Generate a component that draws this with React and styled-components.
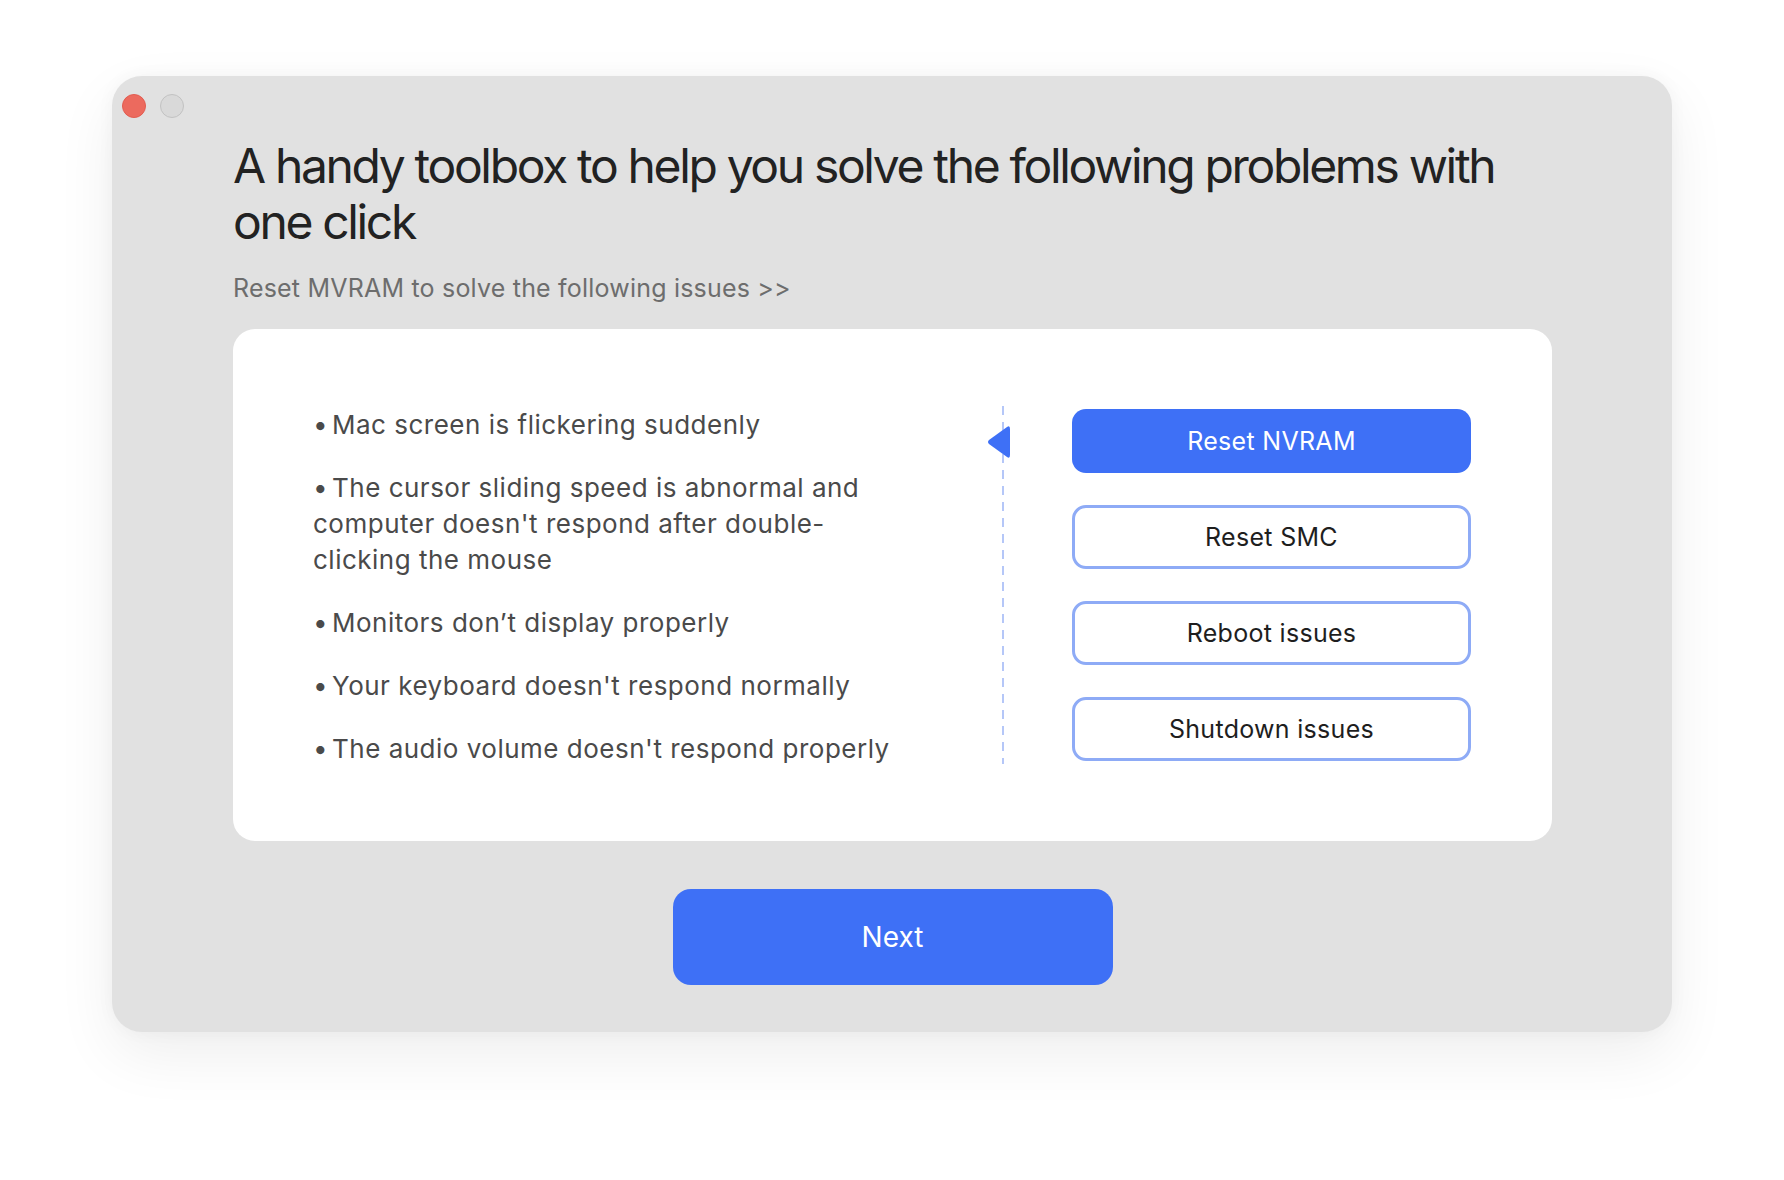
import React, { useState } from 'react';
import styled, { createGlobalStyle } from 'styled-components';

const GlobalStyle = createGlobalStyle`
    html, body {
        margin: 0;
        padding: 0;
        background: #fff;
    }
    body {
        font-family: Inter, "Noto Sans", "Liberation Sans", sans-serif;
        -webkit-font-smoothing: antialiased;
    }
`

const Page = styled.div`
    display: flex;
    justify-content: center;
    padding-top: 76px;
    min-height: 1180px;
    box-sizing: border-box;
`

const Window = styled.div`
    width: 1560px;
    height: 956px;
    box-sizing: border-box;
    background: #e1e1e1;
    border-radius: 30px;
    box-shadow: 0 22px 60px rgba(0, 0, 0, 0.07), 0 0 18px rgba(0, 0, 0, 0.04);
    display: flex;
    flex-direction: column;
`

const TitleBar = styled.div`
    display: flex;
    gap: 14px;
    padding: 18px 0 0 10px;
`

const Light = styled.span`
    width: 24px;
    height: 24px;
    border-radius: 50%;
    box-sizing: border-box;
    background: ${p => p.$close ? '#ec6a5e' : '#d9d9d9'};
    border: 1px solid ${p => p.$close ? '#e25c50' : '#c2c2c2'};
`

const Content = styled.div`
    display: flex;
    flex-direction: column;
    padding: 0 120px 0 121px;
`

const Title = styled.h1`
    margin: 20px 0 0;
    font-size: 48px;
    line-height: 56px;
    font-weight: 400;
    color: #222;
    letter-spacing: -2.35px;
`

const Subtitle = styled.div`
    margin-top: 23px;
    font-size: 25px;
    line-height: 30px;
    color: #6d6d6d;
    letter-spacing: 0.2px;
`

const Card = styled.div`
    margin-top: 26px;
    height: 512px;
    box-sizing: border-box;
    background: #fff;
    border-radius: 22px;
    display: flex;
    align-items: center;
    padding: 0 81px 0 80px;
`

const IssueList = styled.ul`
    list-style: none;
    margin: 4px 0 0;
    padding: 0;
    width: 600px;
    display: flex;
    flex-direction: column;
    gap: 27px;
`

const Issue = styled.li`
    font-size: 26px;
    line-height: 36px;
    color: #4a4a4a;
    letter-spacing: 0.5px;

    &::before {
        content: '\\2022';
        display: inline-block;
        width: 19px;
        letter-spacing: 0;
    }
`

const Divider = styled.div`
    position: relative;
    align-self: center;
    width: 2px;
    height: 358px;
    margin-left: 89px;
    background: repeating-linear-gradient(to bottom, #b5c7f8 0 9px, transparent 9px 16px);
`

const Pointer = styled.svg`
    position: absolute;
    left: -15px;
    top: 19px;
`

const ButtonColumn = styled.div`
    margin-left: 68px;
    width: 399px;
    display: flex;
    flex-direction: column;
    gap: 32px;
`

const OptionButton = styled.button`
    height: 64px;
    box-sizing: border-box;
    border-radius: 14px;
    font-family: inherit;
    font-size: 25px;
    letter-spacing: 0.3px;
    cursor: pointer;
    background: ${p => p.$active ? '#3e70f6' : '#fff'};
    color: ${p => p.$active ? '#fff' : '#1e1e1e'};
    border: ${p => p.$active ? 'none' : '3px solid #8eabf6'};
`

const Footer = styled.div`
    display: flex;
    justify-content: center;
    margin-top: 48px;
`

const NextButton = styled.button`
    width: 440px;
    height: 96px;
    border: none;
    border-radius: 18px;
    background: #3e70f6;
    color: #fff;
    font-family: inherit;
    font-size: 28px;
    cursor: pointer;
`

const issues = [
    'Mac screen is flickering suddenly',
    "The cursor sliding speed is abnormal and computer doesn't respond after double-clicking the mouse",
    'Monitors don\u2019t display properly',
    "Your keyboard doesn't respond normally",
    "The audio volume doesn't respond properly",
]

const options = ['Reset NVRAM', 'Reset SMC', 'Reboot issues', 'Shutdown issues']

const App = () => {

    const [ selected, setSelected ] = useState(0)

    return (
        <Page>
            <GlobalStyle />
            <Window>
                <TitleBar>
                    <Light $close />
                    <Light />
                </TitleBar>
                <Content>
                    <Title>A handy toolbox to help you solve the following problems with one click</Title>
                    <Subtitle>Reset MVRAM to solve the following issues &gt;&gt;</Subtitle>
                    <Card>
                        <IssueList>
                            { issues.map(text => <Issue key={text}>{text}</Issue>) }
                        </IssueList>
                        <Divider>
                            <Pointer width="23" height="34" viewBox="0 0 23 34">
                                <path d="M20 2 Q23 0 23 4 L23 30 Q23 34 20 32 L2 19 Q0 17 2 15 Z" fill="#3e70f6" />
                            </Pointer>
                        </Divider>
                        <ButtonColumn>
                            { options.map((label, i) => (
                                <OptionButton key={label} $active={i === selected} onClick={() => setSelected(i)}>
                                    { label }
                                </OptionButton>
                            )) }
                        </ButtonColumn>
                    </Card>
                    <Footer>
                        <NextButton>Next</NextButton>
                    </Footer>
                </Content>
            </Window>
        </Page>
    )
}

export default App;
